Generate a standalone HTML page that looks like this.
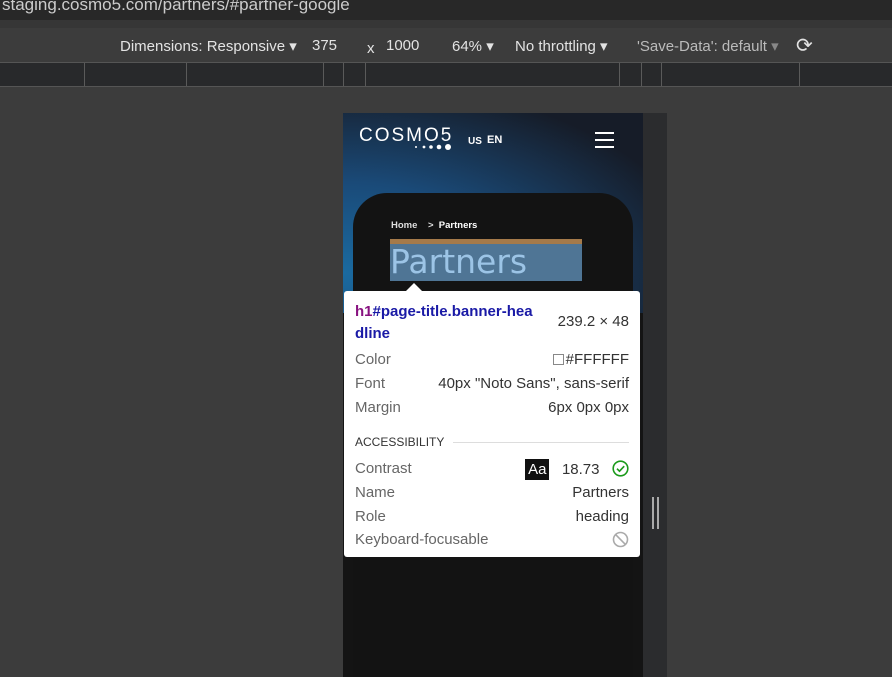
<!DOCTYPE html>
<html><head><style>
*{margin:0;padding:0;box-sizing:border-box}
html,body{width:892px;height:677px;overflow:hidden}
body{background:#3c3c3c;font-family:"Liberation Sans",sans-serif;position:relative}
.a{position:absolute}
.url{left:0;top:0;width:892px;height:20px;background:#282828;color:#ccc;font-size:17px;line-height:10px;padding-left:2px;overflow:hidden}
.tb{top:28px;left:0;width:892px;height:34px;color:#e3e3e3;font-size:15px}
.tb span{position:absolute;top:9px}
.rul{top:62px;left:0;width:892px;height:25px;background:#28292b;border-top:1px solid #555;border-bottom:1px solid #555}
.tick{position:absolute;top:0;width:1px;height:23px;background:#5a5a5a}
.dev{left:343px;top:113px;width:300px;height:564px;background:#141414;overflow:hidden}
.hero{left:0;top:0;width:300px;height:200px;background:radial-gradient(ellipse at 0% 80%,#1a6aa0 0%,#1a4a78 40%,#161c28 85%)}
.card{left:10px;top:80px;width:280px;height:484px;background:#131313;border-radius:34px 34px 0 0}
.tip{left:344px;top:291px;width:296px;height:266px;background:#fff;border-radius:3px;font-family:"Liberation Sans",sans-serif;font-size:15px;color:#666}
.row{position:absolute;left:11px;right:11px;height:20px}
.row .r{position:absolute;right:0;top:0;color:#333}
</style></head><body>
<div class="a url">staging.cosmo5.com/partners/#partner-google</div>
<div class="a" style="left:0;top:20px;width:892px;height:8px;background:#363636"></div>
<div class="a tb">
<span style="left:120px">Dimensions: Responsive ▾</span>
<span style="left:312px">375</span>
<span style="left:367px;top:12px">x</span>
<span style="left:386px">1000</span>
<span style="left:452px">64% ▾</span>
<span style="left:515px">No throttling ▾</span>
<span style="left:637px;color:#bbb">'Save-Data': default <span style="position:static;color:#888">▾</span></span>
<span style="left:796px;top:5px;font-size:20px">⟳</span>
</div>
<div class="a rul">
<div class="tick" style="left:84px"></div><div class="tick" style="left:186px"></div><div class="tick" style="left:323px"></div><div class="tick" style="left:343px"></div><div class="tick" style="left:365px"></div><div class="tick" style="left:619px"></div><div class="tick" style="left:641px"></div><div class="tick" style="left:661px"></div><div class="tick" style="left:799px"></div>
</div>
<div class="a" style="left:643px;top:113px;width:24px;height:564px;background:#2b2c2e"></div>
<div class="a" style="left:652px;top:497px;width:2px;height:32px;background:#aaa"></div>
<div class="a" style="left:657px;top:497px;width:2px;height:32px;background:#aaa"></div>
<div class="a dev">
<div class="a hero"></div>
<div class="a card"></div>
<div class="a" style="left:16px;top:12px;color:#fff;font-size:19px;letter-spacing:2px">COSMO5</div>
<svg class="a" style="left:70px;top:30px" width="40" height="8"><circle cx="3" cy="4" r="1" fill="#fff"/><circle cx="11" cy="4" r="1.4" fill="#fff"/><circle cx="18" cy="4" r="1.8" fill="#fff"/><circle cx="26" cy="4" r="2.3" fill="#fff"/><circle cx="35" cy="4" r="3" fill="#fff"/></svg>
<div class="a" style="left:125px;top:23px;color:#fff;font-size:10px;font-weight:bold">US</div>
<div class="a" style="left:144px;top:21px;color:#fff;font-size:11px;font-weight:bold">EN</div>
<div class="a" style="left:252px;top:19px;width:19px;height:2px;background:#fff;box-shadow:0 7px 0 #fff,0 14px 0 #fff"></div>
<div class="a" style="left:48px;top:107px;color:#ddd;font-size:9.5px;font-weight:bold">Home&nbsp;&nbsp;&nbsp;&nbsp;&gt;&nbsp; <span style="color:#fff">Partners</span></div>
<div class="a" style="left:47px;top:126px;width:192px;height:5px;background:#a57a4a"></div>
<div class="a" style="left:47px;top:131px;width:192px;height:37px;background:#4f7595;color:#9cc4e6;font-size:33px;line-height:36px;font-family:'DejaVu Sans',sans-serif">Partners</div>
<div class="a" style="left:63px;top:170px;width:0;height:0;border:8px solid transparent;border-bottom-color:#fff;border-top:0"></div>
</div>
<div class="a tip">
<div class="a" style="left:11px;top:10px;font-weight:bold;color:#1a1aa6;font-size:15px;line-height:22px;width:186px;word-break:break-all"><span style="color:#881280">h1</span>#page-title.banner-headline</div>
<div class="a" style="right:11px;top:22px;color:#333">239.2 × 48</div>
<div class="row" style="top:60px">Color<span class="r"><span style="display:inline-block;width:11px;height:11px;border:1px solid #888;vertical-align:-1px;margin-right:2px"></span>#FFFFFF</span></div>
<div class="row" style="top:84px">Font<span class="r">40px "Noto Sans", sans-serif</span></div>
<div class="row" style="top:108px">Margin<span class="r">6px 0px 0px</span></div>
<div class="row" style="top:144px;font-size:12px;color:#333">ACCESSIBILITY<div class="a" style="left:98px;right:0;top:7px;height:1px;background:#ddd"></div></div>
<div class="row" style="top:169px">Contrast<span class="r"><span style="background:#111;color:#fff;padding:2px 3px">Aa</span>&nbsp;&nbsp;&nbsp;18.73&nbsp;&nbsp;&nbsp;<svg width="17" height="17" style="vertical-align:-3px"><circle cx="8.5" cy="8.5" r="7.3" fill="none" stroke="#1a9a1a" stroke-width="1.6"/><path d="M5 8.7l2.5 2.5 4.7-5" fill="none" stroke="#1a9a1a" stroke-width="1.6"/></svg></span></div>
<div class="row" style="top:193px">Name<span class="r">Partners</span></div>
<div class="row" style="top:217px">Role<span class="r">heading</span></div>
<div class="row" style="top:240px">Keyboard-focusable<span class="r"><svg width="17" height="17" style="vertical-align:-3px"><circle cx="8.5" cy="8.5" r="7" fill="none" stroke="#aaa" stroke-width="1.6"/><path d="M3.6 3.6l9.8 9.8" stroke="#aaa" stroke-width="1.6"/></svg></span></div>
</div>
</body></html>
